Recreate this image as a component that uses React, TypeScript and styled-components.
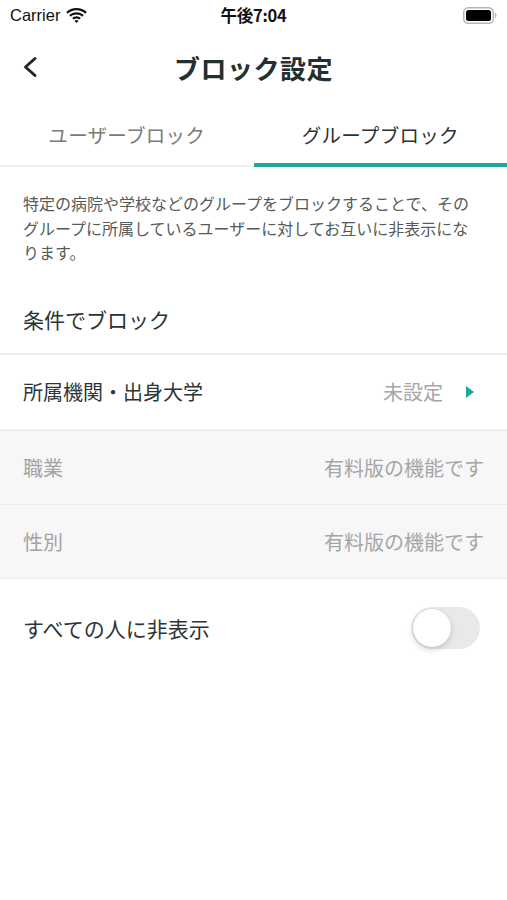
import React, { useState } from "react";
import styled, { createGlobalStyle } from "styled-components";

const Global = createGlobalStyle`
  html, body { margin: 0; padding: 0; background: #ffffff; }
  body {
    font-family: "Noto Sans CJK JP", "Noto Sans", "Liberation Sans", sans-serif;
    color: #2a3333;
    -webkit-font-smoothing: antialiased;
  }
  * { box-sizing: border-box; }
`;

const TEAL = "#1fa698";

const Screen = styled.div`
  width: 507px;
  min-height: 900px;
  background: #fff;
  display: flex;
  flex-direction: column;
`;

const StatusBar = styled.div`
  height: 30px;
  padding: 0 10px;
  display: grid;
  grid-template-columns: 1fr auto 1fr;
  align-items: center;
`;

const StatusLeft = styled.div`
  display: flex;
  align-items: center;
  gap: 6px;
  font-family: "Liberation Sans", "Noto Sans", sans-serif;
  font-size: 16.5px;
  color: #111;
`;

const Time = styled.div`
  font-family: "Noto Sans CJK JP", "Liberation Sans", sans-serif;
  font-weight: 700;
  font-size: 16.5px;
  color: #111;
  letter-spacing: -0.3px;
`;

const StatusRight = styled.div`
  display: flex;
  justify-content: flex-end;
`;

const NavBar = styled.div`
  height: 74px;
  display: grid;
  grid-template-columns: 60px 1fr 60px;
  align-items: center;
`;

const BackButton = styled.button`
  border: none;
  background: none;
  padding: 0 0 0 21px;
  height: 40px;
  display: flex;
  align-items: center;
  cursor: pointer;
`;

const Title = styled.h1`
  margin: 0;
  text-align: center;
  font-size: 26px;
  font-weight: 700;
  color: #243030;
  letter-spacing: 0.5px;
`;

const Tabs = styled.div`
  display: flex;
  height: 63px;
`;

const Tab = styled.div<{ $active?: boolean }>`
  flex: 1;
  display: flex;
  align-items: center;
  justify-content: center;
  font-size: 19.5px;
  letter-spacing: 0.3px;
  color: ${(p) => (p.$active ? "#2a3333" : "#7a7a7a")};
  border-bottom: ${(p) => (p.$active ? `4px solid ${TEAL}` : "2px solid #efefef")};
  padding-top: ${(p) => (p.$active ? "1px" : "0")};
  align-self: stretch;
`;

const Description = styled.p`
  margin: 24px 0 0;
  padding: 0 23px;
  font-size: 16px;
  line-height: 24.5px;
  color: #555a5a;
`;

const SectionHeading = styled.div`
  padding: 39px 23px 19px;
  font-size: 21px;
  line-height: 30px;
  color: #2a3333;
  border-bottom: 2px solid #eeeeee;
`;

const Row = styled.div<{ $disabled?: boolean; $height?: number }>`
  height: ${(p) => p.$height ?? 76}px;
  padding: 0 23px;
  display: flex;
  align-items: center;
  justify-content: space-between;
  background: ${(p) => (p.$disabled ? "#f7f7f7" : "#ffffff")};
  border-bottom: ${(p) => (p.$disabled ? "1px solid #ebebeb" : "2px solid #eeeeee")};
`;

const RowLabel = styled.span<{ $disabled?: boolean; $strong?: boolean }>`
  font-size: ${(p) => (p.$strong ? "21px" : "20px")};
  color: ${(p) => (p.$disabled ? "#a3a3a3" : "#2e3535")};
`;

const RowRight = styled.div`
  display: flex;
  align-items: center;
  gap: 23px;
`;

const RowValue = styled.span`
  font-size: 20px;
  color: #a6a6a6;
`;

const Caret = styled.span`
  width: 0;
  height: 0;
  border-top: 6px solid transparent;
  border-bottom: 6px solid transparent;
  border-left: 8.5px solid ${TEAL};
  margin-right: 10px;
`;

const ToggleRow = styled.div`
  height: 100px;
  padding: 0 27px 2px 23px;
  display: flex;
  align-items: center;
  justify-content: space-between;
`;

const Switch = styled.button<{ $on: boolean }>`
  width: 69px;
  height: 42px;
  border-radius: 21px;
  border: none;
  padding: 2px;
  background: ${(p) => (p.$on ? TEAL : "#e9e9ea")};
  display: flex;
  justify-content: ${(p) => (p.$on ? "flex-end" : "flex-start")};
  cursor: pointer;
`;

const Knob = styled.span`
  width: 38px;
  height: 38px;
  border-radius: 50%;
  background: #fff;
  box-shadow: 0 3px 6px rgba(0, 0, 0, 0.15), 0 0 0 0.5px rgba(0, 0, 0, 0.08);
`;

const Wifi = () => (
  <svg width="21" height="15" viewBox="0 0 21 15">
    <path d="M10.5 2.2c3.4 0 6.5 1.3 8.8 3.5l1.5-1.6C18.1 1.5 14.5 0 10.5 0S2.9 1.5 0.2 4.1l1.5 1.6c2.3-2.2 5.4-3.5 8.8-3.5z" fill="#111" />
    <path d="M10.5 6.4c2.2 0 4.3.9 5.8 2.3l1.5-1.6c-1.9-1.8-4.5-2.900-7.300-2.900S5.1 5.3 3.2 7.1l1.5 1.6c1.5-1.4 3.6-2.3 5.8-2.3z" fill="#111" />
    <path d="M10.5 10.5c1.1 0 2.1.4 2.8 1.1l1.5-1.6c-1.1-1.1-2.7-1.8-4.3-1.8s-3.2.7-4.3 1.8l1.5 1.6c.7-.7 1.7-1.1 2.8-1.1z" fill="#111" />
    <path d="M10.5 15l2-2.1c-.5-.5-1.2-.8-2-.8s-1.5.3-2 .8z" fill="#111" />
  </svg>
);

const Battery = () => (
  <svg width="34" height="17" viewBox="0 0 34 17">
    <rect x="0.75" y="0.75" width="29.5" height="15.5" rx="4.5" fill="none" stroke="#b5b5b5" strokeWidth="1.5" />
    <rect x="3" y="3" width="25" height="11" rx="2.5" fill="#000" />
    <path d="M31.8 5.6v5.8c1-.3 1.7-1.5 1.7-2.9s-.7-2.6-1.7-2.9z" fill="#b5b5b5" />
  </svg>
);

const Chevron = () => (
  <svg width="18" height="22" viewBox="0 0 18 22">
    <path d="M14 2.5L4.5 11 14 19.5" fill="none" stroke="#1e2828" strokeWidth="3" strokeLinecap="round" strokeLinejoin="round" />
  </svg>
);

export default function App() {
  const [hideAll, setHideAll] = useState(false);
  return (
    <Screen>
      <Global />
      <StatusBar>
        <StatusLeft>
          Carrier
          <Wifi />
        </StatusLeft>
        <Time>午後7:04</Time>
        <StatusRight>
          <Battery />
        </StatusRight>
      </StatusBar>

      <NavBar>
        <BackButton aria-label="戻る">
          <Chevron />
        </BackButton>
        <Title>ブロック設定</Title>
        <span />
      </NavBar>

      <Tabs>
        <Tab>ユーザーブロック</Tab>
        <Tab $active>グループブロック</Tab>
      </Tabs>

      <Description>
        特定の病院や学校などのグループをブロックすることで、そのグループに所属しているユーザーに対してお互いに非表示になります。
      </Description>

      <SectionHeading>条件でブロック</SectionHeading>

      <Row>
        <RowLabel>所属機関・出身大学</RowLabel>
        <RowRight>
          <RowValue>未設定</RowValue>
          <Caret />
        </RowRight>
      </Row>
      <Row $disabled $height={74}>
        <RowLabel $disabled>職業</RowLabel>
        <RowValue>有料版の機能です</RowValue>
      </Row>
      <Row $disabled $height={74}>
        <RowLabel $disabled>性別</RowLabel>
        <RowValue>有料版の機能です</RowValue>
      </Row>

      <ToggleRow>
        <RowLabel $strong>すべての人に非表示</RowLabel>
        <Switch $on={hideAll} onClick={() => setHideAll(!hideAll)} aria-label="すべての人に非表示">
          <Knob />
        </Switch>
      </ToggleRow>
    </Screen>
  );
}
